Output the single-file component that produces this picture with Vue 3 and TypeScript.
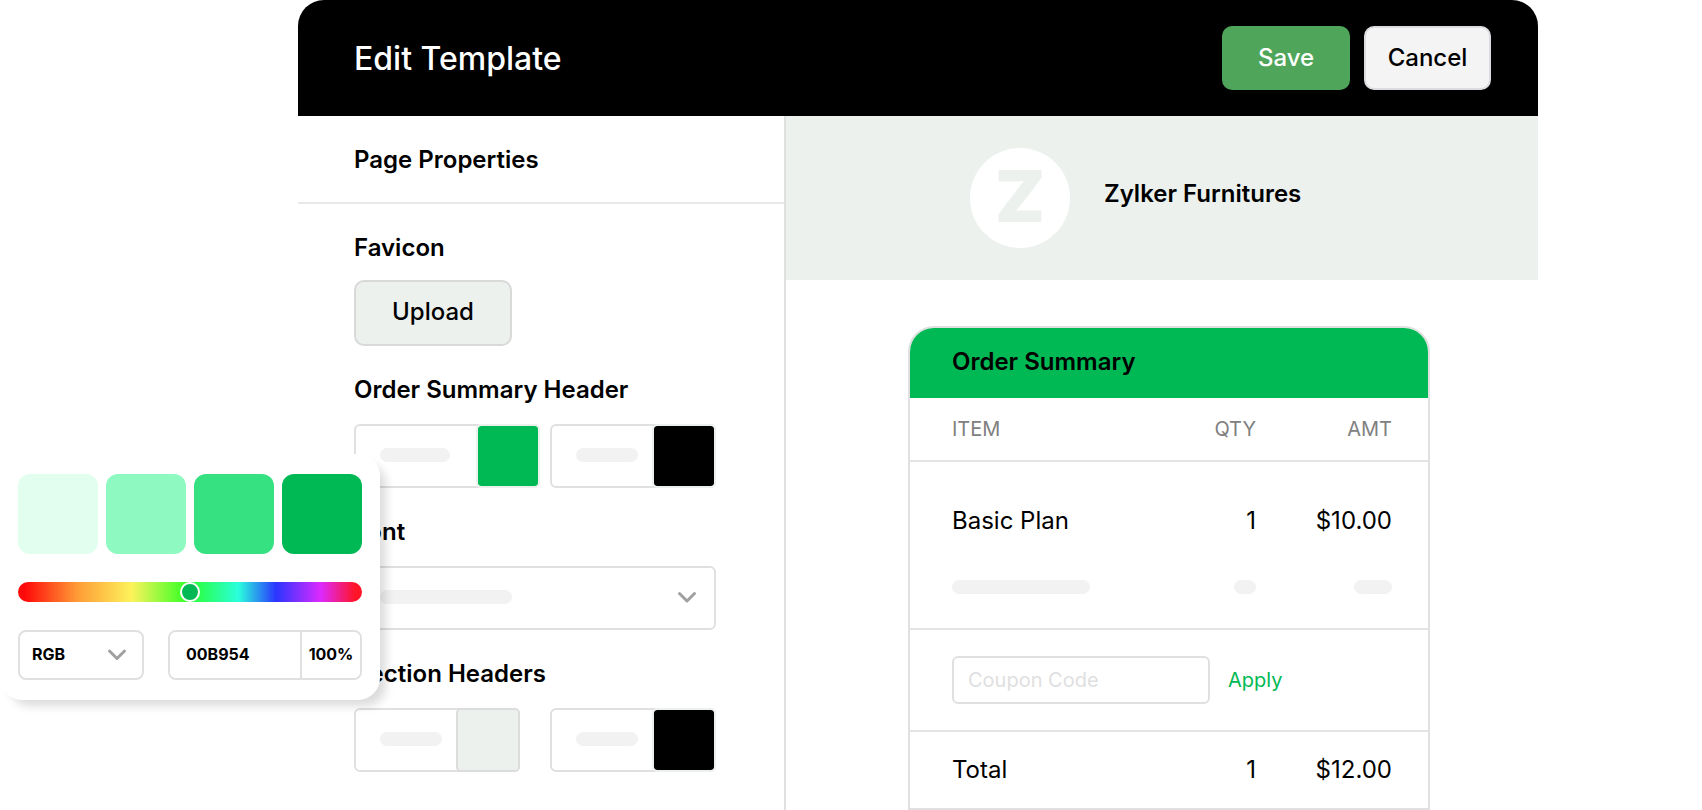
<script setup lang="ts">
import { ref } from 'vue'

interface ColorField {
  id: string
  label: string
  color: string
  size: 'wide' | 'regular'
  outlined?: boolean
}

const headerColors = ref<ColorField[]>([
  { id: 'summary-background', label: 'Order summary background', color: '#00b954', size: 'wide' },
  { id: 'summary-text', label: 'Order summary text', color: '#000000', size: 'regular' },
])

const sectionColors = ref<ColorField[]>([
  { id: 'section-background', label: 'Section background', color: '#ecf1ee', size: 'regular', outlined: true },
  { id: 'section-text', label: 'Section text', color: '#000000', size: 'regular' },
])

const shades = ['#e1feef', '#8ef9c0', '#36e182', '#00b954']
const hue = ref(50)
const colorMode = ref('RGB')
const hex = ref('00B954')
const opacity = ref('100%')
const coupon = ref('')
</script>

<template>
  <div class="page">
    <main class="editor">
      <header class="topbar">
        <h1 class="title">Edit Template</h1>
        <div class="actions">
          <button type="button" class="btn save">Save</button>
          <button type="button" class="btn cancel">Cancel</button>
        </div>
      </header>

      <div class="body">
        <aside class="properties">
          <h2 class="heading panel-title">Page Properties</h2>
          <div class="fields">
            <section class="field favicon">
              <h3 class="heading">Favicon</h3>
              <button type="button" class="btn upload">Upload</button>
            </section>

            <section class="field">
              <h3 class="heading">Order Summary Header</h3>
              <div class="pair">
                <div v-for="f in headerColors" :key="f.id" class="color" :class="f.size">
                  <input class="color-text" type="text" :aria-label="f.label + ' value'" />
                  <span class="bone color-bone"></span>
                  <input :id="f.id" v-model="f.color" class="swatch" type="color" :aria-label="f.label" />
                </div>
              </div>
            </section>

            <section class="field">
              <label class="heading" for="font-select">Font</label>
              <div class="picker">
                <select id="font-select" class="font-select">
                  <option value=""></option>
                </select>
                <span class="bone font-bone"></span>
                <svg class="chevron" width="20" height="14" viewBox="0 0 20 14" aria-hidden="true">
                  <path d="M2.500 2.500 L10 10 L17.500 2.500" />
                </svg>
              </div>
            </section>

            <section class="field">
              <h3 class="heading">Section Headers</h3>
              <div class="pair">
                <div v-for="f in sectionColors" :key="f.id" class="color" :class="f.size">
                  <input class="color-text" type="text" :aria-label="f.label + ' value'" />
                  <span class="bone color-bone"></span>
                  <input
                    :id="f.id"
                    v-model="f.color"
                    class="swatch"
                    :class="{ outlined: f.outlined }"
                    type="color"
                    :aria-label="f.label"
                  />
                </div>
              </div>
            </section>
          </div>
        </aside>

        <section class="preview">
          <div class="brand">
            <span class="logo" aria-hidden="true">Z</span>
            <h2 class="heading brand-name">Zylker Furnitures</h2>
          </div>

          <article class="card">
            <h3 class="heading card-title">Order Summary</h3>
            <table class="order">
              <thead>
                <tr>
                  <th class="item">ITEM</th>
                  <th class="qty">QTY</th>
                  <th class="amt">AMT</th>
                </tr>
              </thead>
              <tbody>
                <tr class="plan">
                  <td class="item">Basic Plan</td>
                  <td class="qty">1</td>
                  <td class="amt">$10.00</td>
                </tr>
                <tr class="placeholder">
                  <td class="item"><span class="bone long"></span></td>
                  <td class="qty"><span class="bone tiny"></span></td>
                  <td class="amt"><span class="bone short"></span></td>
                </tr>
                <tr class="coupon">
                  <td class="item" colspan="3">
                    <form class="coupon-form" @submit.prevent>
                      <input v-model="coupon" class="coupon-input" type="text" placeholder="Coupon Code" aria-label="Coupon Code" />
                      <button type="submit" class="apply">Apply</button>
                    </form>
                  </td>
                </tr>
              </tbody>
              <tfoot>
                <tr>
                  <td class="item">Total</td>
                  <td class="qty">1</td>
                  <td class="amt">$12.00</td>
                </tr>
              </tfoot>
            </table>
          </article>
        </section>
      </div>
    </main>

    <div class="popover" role="dialog" aria-label="Color picker">
      <div class="shades">
        <button
          v-for="shade in shades"
          :key="shade"
          type="button"
          class="shade"
          :style="{ backgroundColor: shade }"
          :aria-label="shade"
        ></button>
      </div>
      <input v-model="hue" class="hue" type="range" min="0" max="100" aria-label="Hue" />
      <div class="values">
        <div class="picker mode">
          <select v-model="colorMode" class="mode-select" aria-label="Color format">
            <option>RGB</option>
            <option>HSL</option>
          </select>
          <svg class="chevron" width="20" height="14" viewBox="0 0 20 14" aria-hidden="true">
            <path d="M2.500 3 L10 10.500 L17.500 3" />
          </svg>
        </div>
        <div class="code">
          <input v-model="hex" class="code-hex" type="text" aria-label="Hex value" />
          <input v-model="opacity" class="code-opacity" type="text" aria-label="Opacity" />
        </div>
      </div>
    </div>
  </div>
</template>

<style>
body {
  margin: 0;
  background: #fff;
}
</style>

<style scoped>
.page,
.page * {
  box-sizing: border-box;
}

.page {
  position: relative;
  min-height: 100vh;
  padding: 0 164px 0 298px;
  background: #fff;
  color: #000;
  font-family: Inter, 'Liberation Sans', sans-serif;
  font-size: 24px;
  line-height: 28px;
}

.page button,
.page input,
.page select {
  margin: 0;
  font-family: inherit;
  color: inherit;
  outline: none;
}

.editor {
  display: flex;
  flex-direction: column;
  min-height: 100vh;
}

.topbar {
  display: flex;
  align-items: center;
  justify-content: space-between;
  min-height: 116px;
  padding: 0 47px 0 56px;
  border-radius: 26px 26px 0 0;
  background: #000;
  color: #fff;
}

.title {
  margin: 0;
  padding-top: 2px;
  font-size: 32px;
  font-weight: 500;
  line-height: 40px;
}

.actions {
  display: flex;
  gap: 14px;
}

.btn {
  height: 64px;
  padding: 0;
  border: 0;
  border-radius: 10px;
  font-size: 24px;
  font-weight: 500;
  line-height: 28px;
}

.page .save {
  width: 128px;
  background: #4fa65b;
  color: #fff;
}

.page .cancel {
  width: 127px;
  border: 2px solid #dcdbe0;
  background: #f4f4f4;
  color: #000;
}

.body {
  display: grid;
  grid-template-columns: 488px 1fr;
  flex: 1;
}

.properties {
  border-right: 2px solid #e0e0e0;
}

.heading {
  display: block;
  margin: 0;
  font-size: 24px;
  font-weight: 600;
  line-height: 28px;
}

.panel-title {
  padding: 30px 56px 28px;
  border-bottom: 2px solid #e8e8e8;
}

.fields {
  display: flex;
  flex-direction: column;
  gap: 30px;
  padding: 30px 68px 30px 56px;
}

.field {
  display: flex;
  flex-direction: column;
  gap: 20px;
}

.favicon {
  gap: 18px;
}

.upload {
  width: 158px;
  height: 66px;
  padding-bottom: 2px;
  border: 2px solid #d9d9d9;
  background: #ecf1ee;
}

.pair {
  display: flex;
  justify-content: space-between;
}

.color {
  display: grid;
  grid-template-columns: 1fr 64px;
  height: 64px;
}

.wide {
  width: 186px;
}

.regular {
  width: 166px;
}

.color-text {
  grid-area: 1 / 1 / 2 / 3;
  width: 100%;
  height: 64px;
  padding: 0 66px 0 24px;
  border: 2px solid #e0e0e0;
  border-radius: 6px;
  background: #fff;
}

.bone {
  display: inline-block;
  height: 14px;
  border-radius: 7px;
  background: #f2f2f2;
  pointer-events: none;
}

.color-bone {
  grid-area: 1 / 1;
  align-self: center;
  width: 62px;
  margin: 0 0 2px 26px;
}

.wide .color-bone {
  width: 70px;
}

.swatch {
  grid-area: 1 / 2;
  width: 64px;
  height: 64px;
  padding: 0;
  border: 2px solid #ecf1ee;
  border-radius: 5px;
  background: #ecf1ee;
  appearance: none;
}

.outlined {
  border-color: #dcdcdc;
}

.swatch::-webkit-color-swatch-wrapper {
  padding: 0;
}

.swatch::-webkit-color-swatch {
  border: 0;
  border-radius: 3px;
}

.picker {
  display: grid;
  align-items: center;
}

.picker > * {
  grid-area: 1 / 1;
}

.font-select {
  width: 100%;
  height: 64px;
  border: 2px solid #e0e0e0;
  border-radius: 6px;
  background: #fff;
  appearance: none;
}

.font-bone {
  width: 132px;
  margin: 0 0 2px 26px;
}

.chevron {
  justify-self: end;
  margin-right: 19px;
  pointer-events: none;
}

.chevron path {
  fill: none;
  stroke: #a0a0a0;
  stroke-width: 3;
  stroke-linecap: round;
  stroke-linejoin: round;
}

.brand {
  display: flex;
  align-items: center;
  gap: 34px;
  height: 164px;
  padding-left: 184px;
  background: #ecf1ee;
}

.logo {
  flex: none;
  width: 100px;
  height: 100px;
  border-radius: 50%;
  background: #fff;
  color: #ecf1ee;
  font-size: 72px;
  font-weight: 900;
  line-height: 96px;
  text-align: center;
}

.brand-name {
  padding-bottom: 8px;
}

.card {
  margin: 46px 108px 0 122px;
  border: 2px solid #e0e0e0;
  border-radius: 26px 26px 0 0;
  overflow: hidden;
}

.card-title {
  padding: 20px 42px 22px;
  background: #00b954;
}

.order {
  width: 100%;
  border-collapse: separate;
  border-spacing: 0;
  table-layout: fixed;
}

.order th,
.order td {
  padding: 0;
  font-weight: 400;
  text-align: right;
}

.order .item {
  padding-left: 42px;
  text-align: left;
}

.order .qty {
  width: 90px;
}

.order .amt {
  width: 172px;
  padding-right: 36px;
}

.order th {
  height: 64px;
  border-bottom: 2px solid #e4e4e4;
  color: #808080;
  font-size: 20px;
}

.plan td {
  height: 118px;
}

.order .placeholder td {
  height: 50px;
  border-bottom: 2px solid #e4e4e4;
  line-height: 14px;
  vertical-align: top;
}

.placeholder .bone {
  display: inline-block;
  vertical-align: top;
}

.long {
  width: 138px;
}

.tiny {
  width: 22px;
}

.short {
  width: 38px;
}

.coupon td {
  height: 102px;
  border-bottom: 2px solid #e4e4e4;
}

.coupon-form {
  display: flex;
  align-items: center;
  gap: 18px;
}

.coupon-input {
  width: 258px;
  height: 48px;
  padding: 0 14px;
  border: 2px solid #e0e0e0;
  border-radius: 6px;
  background: #fff;
  font-size: 20px;
}

.coupon-input::placeholder {
  color: #e0e0e0;
  opacity: 1;
}

.page .apply {
  padding: 0;
  border: 0;
  background: none;
  color: #00b954;
  font-size: 20px;
  line-height: 28px;
}

.order tfoot td {
  height: 76px;
}

.popover {
  position: absolute;
  top: 454px;
  left: 0;
  display: flex;
  flex-direction: column;
  gap: 28px;
  width: 380px;
  padding: 20px 18px;
  border-radius: 22px;
  background: #fff;
  box-shadow: 8px 8px 10px -2px rgba(0, 0, 0, 0.14);
}

.shades {
  display: grid;
  grid-template-columns: repeat(4, 1fr);
  gap: 8px;
}

.shade {
  height: 80px;
  padding: 0;
  border: 0;
  border-radius: 12px;
}

.hue {
  display: block;
  width: 100%;
  height: 20px;
  border-radius: 10px;
  background: linear-gradient(
    90deg,
    #ff0a0a 2%,
    #fe9a35 17%,
    #fdf35b 33%,
    #4cff2a 47%,
    #2aff55 53%,
    #2affdc 64%,
    #2a35ff 75%,
    #dc2aff 88%,
    #ff1428 98%
  );
  appearance: none;
}

.hue::-webkit-slider-thumb {
  width: 20px;
  height: 20px;
  border: 2px solid #fff;
  border-radius: 50%;
  background: #00b954;
  appearance: none;
}

.values {
  display: flex;
  justify-content: space-between;
  font-size: 16px;
}

.mode {
  width: 126px;
}

.mode .chevron {
  margin-right: 17px;
}

.mode-select {
  width: 100%;
  height: 50px;
  padding: 0 0 2px 12px;
  border: 2px solid #e0e0e0;
  border-radius: 8px;
  background: #fff;
  font-size: 16px;
  font-weight: 700;
  appearance: none;
}

.code {
  display: flex;
  width: 194px;
  height: 50px;
  border: 2px solid #e0e0e0;
  border-radius: 8px;
  overflow: hidden;
}

.code input {
  min-width: 0;
  height: 46px;
  border: 0;
  background: #fff;
  font-size: 16px;
  font-weight: 700;
}

.code .code-hex {
  flex: 1;
  padding: 0 0 2px 16px;
}

.code .code-opacity {
  width: 60px;
  padding: 0 0 2px;
  border-left: 2px solid #e0e0e0;
  text-align: center;
}
</style>
